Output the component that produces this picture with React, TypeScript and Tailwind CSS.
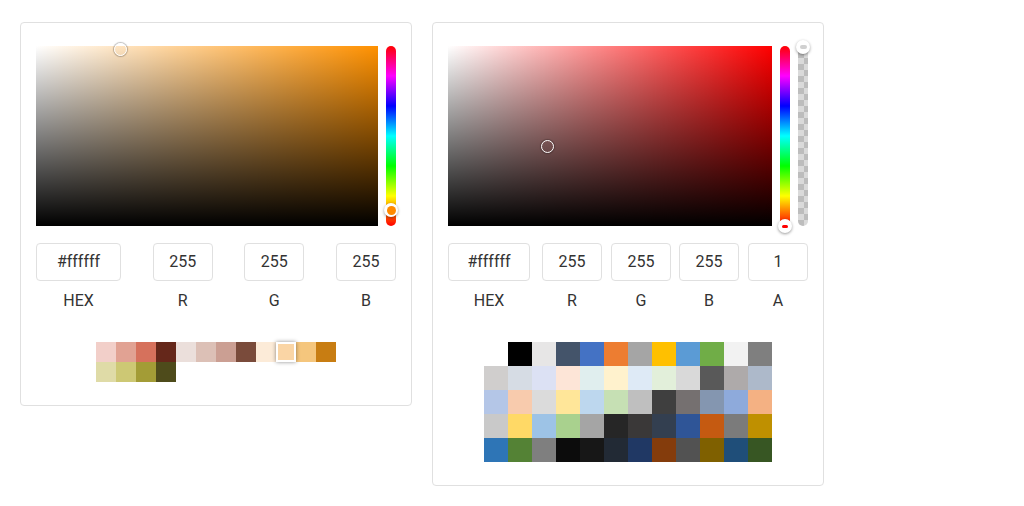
const LEFT_SWATCHES = [
  '#f2cfc9', '#e1a293', '#d6715c', '#65271a', '#ebdfdb', '#dcc0b6',
  '#cb9f93', '#7a4b3b', '#fcebd8', '#fad5a5', '#f5c67d', '#c87d12',
  '#dfdba7', '#cdc874', '#a39c36', '#4e4b1b',
];

const RIGHT_SWATCHES = [
  'transparent', '#000000', '#e7e6e6', '#44546a', '#4472c4', '#ed7d31', '#a5a5a5', '#ffc000', '#5b9bd5', '#70ad47', '#f2f2f2', '#7f7f7f',
  '#d0cecd', '#d6dce4', '#dce1f4', '#fde5d7', '#e0eeee', '#fff2cd', '#deeaf6', '#e2efda', '#d9d9d9', '#595959', '#aeaaaa', '#adb9ca',
  '#b4c6e7', '#f8cbad', '#dbdbdb', '#ffe699', '#bdd7ee', '#c6e0b4', '#bfbfbf', '#3f3f3f', '#757070', '#8496b0', '#8eaadb', '#f4b183',
  '#c9c9c9', '#ffd966', '#9dc3e6', '#a9d18e', '#a5a5a5', '#262626', '#3a3838', '#333f50', '#2f5597', '#c55a11', '#7b7b7b', '#bf9000',
  '#2e75b6', '#548235', '#7f7f7f', '#0c0c0c', '#171717', '#222a35', '#203864', '#843c0c', '#525252', '#7f6000', '#1f4e79', '#375623',
];

function Field({ value, label, width }: { value: string; label: string; width: string }) {
  return (
    <div className="flex flex-col items-center">
      <div
        className={`${width} h-[38px] flex items-center justify-center rounded-[4px] border border-[#e0e0e0] text-[16px] text-[#333]`}
      >
        {value}
      </div>
      <div className="mt-[8px] leading-[24px] text-[16px] text-[#333]">{label}</div>
    </div>
  );
}

function SatHandle({ className }: { className: string }) {
  return (
    <div
      className={`absolute w-[13px] h-[13px] -ml-[6.5px] -mt-[6.5px] rounded-full border-[1.5px] border-white shadow-[0_0_1px_1px_rgba(0,0,0,0.25)] ${className}`}
    />
  );
}

function HueBar({ handleTop, handleFill, dot }: { handleTop: string; handleFill: string; dot: string }) {
  return (
    <div className="relative w-[10px] h-[180px] rounded-full bg-[linear-gradient(to_bottom,#f00,#f0f,#00f,#0ff,#0f0,#ff0,#f00)]">
      <div
        className={`absolute left-1/2 ${handleTop} w-[14px] h-[14px] -ml-[7px] -mt-[7px] rounded-full bg-white shadow-[0_1px_3px_rgba(0,0,0,0.4)] flex items-center justify-center`}
      >
        <div className={`${dot} rounded-full ${handleFill}`} />
      </div>
    </div>
  );
}

function LeftPicker() {
  return (
    <div className="w-[392px] rounded-[4px] border border-[#e0e0e0] bg-white px-[15px] pt-[23px] pb-[23px]">
      <div className="flex gap-[8px]">
        <div className="relative w-[342px] h-[180px] bg-[#ff9100]">
          <div className="absolute inset-0 bg-[linear-gradient(to_right,#fff,rgba(255,255,255,0))]" />
          <div className="absolute inset-0 bg-[linear-gradient(to_bottom,rgba(0,0,0,0),#000)]" />
          <SatHandle className="left-[84px] top-[3px]" />
        </div>
        <HueBar handleTop="top-[164px]" handleFill="bg-[#ff8a00]" dot="w-[9px] h-[9px]" />
      </div>
      <div className="mt-[17px] flex justify-between">
        <Field value="#ffffff" label="HEX" width="w-[85px]" />
        <Field value="255" label="R" width="w-[60px]" />
        <Field value="255" label="G" width="w-[60px]" />
        <Field value="255" label="B" width="w-[60px]" />
      </div>
      <div className="mt-[29px] mx-auto w-[240px] flex flex-wrap">
        {LEFT_SWATCHES.map((c, i) =>
          i === 9 ? (
            <div
              key={i}
              className="w-[20px] h-[20px] border-2 border-white shadow-[0_0_4px_rgba(0,0,0,0.45)] relative z-10"
              style={{ backgroundColor: c }}
            />
          ) : (
            <div key={i} className="w-[20px] h-[20px]" style={{ backgroundColor: c }} />
          )
        )}
      </div>
    </div>
  );
}

function RightPicker() {
  return (
    <div className="w-[392px] rounded-[4px] border border-[#e0e0e0] bg-white px-[15px] pt-[23px] pb-[23px]">
      <div className="flex gap-[8px]">
        <div className="relative w-[324px] h-[180px] bg-[#ff0000]">
          <div className="absolute inset-0 bg-[linear-gradient(to_right,#fff,rgba(255,255,255,0))]" />
          <div className="absolute inset-0 bg-[linear-gradient(to_bottom,rgba(0,0,0,0),#000)]" />
          <SatHandle className="left-[99px] top-[100px]" />
        </div>
        <HueBar handleTop="top-[180px]" handleFill="bg-[#ff0000]" dot="w-[6px] h-[3px]" />
        <div className="relative w-[10px] h-[180px] rounded-full bg-[repeating-conic-gradient(#bdbdbd_0_25%,#dadada_0_50%)] bg-[length:12px_12px]">
          <div className="absolute left-1/2 top-[1px] w-[14px] h-[14px] -ml-[7px] -mt-[7px] rounded-full bg-white shadow-[0_1px_3px_rgba(0,0,0,0.4)] flex items-center justify-center">
            <div className="w-[7px] h-[4px] rounded-full bg-[#d0d0d0]" />
          </div>
        </div>
      </div>
      <div className="mt-[17px] flex">
        <Field value="#ffffff" label="HEX" width="w-[82px]" />
        <div className="ml-[12px]">
          <Field value="255" label="R" width="w-[60px]" />
        </div>
        <div className="ml-[9px]">
          <Field value="255" label="G" width="w-[60px]" />
        </div>
        <div className="ml-[8px]">
          <Field value="255" label="B" width="w-[60px]" />
        </div>
        <div className="ml-[9px]">
          <Field value="1" label="A" width="w-[60px]" />
        </div>
      </div>
      <div className="mt-[29px] mx-auto w-[288px] grid grid-cols-12">
        {RIGHT_SWATCHES.map((c, i) => (
          <div key={i} className="w-[24px] h-[24px]" style={{ backgroundColor: c }} />
        ))}
      </div>
    </div>
  );
}

export default function App() {
  return (
    <div className="min-h-screen bg-white font-['Roboto',sans-serif]">
      <div className="flex items-start gap-[20px] pl-[20px] pt-[22px]">
        <LeftPicker />
        <RightPicker />
      </div>
    </div>
  );
}
